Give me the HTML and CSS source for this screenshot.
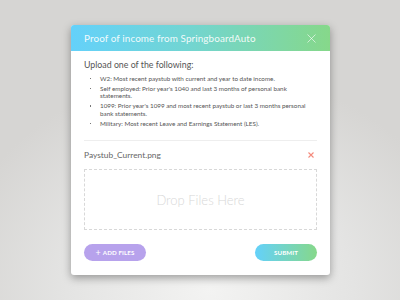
FILE: index.html
```html
<!DOCTYPE html>
<html>
<head>
<meta charset="utf-8">
<link rel="stylesheet" href="styles.css">
</head>
<body>
<div class="modal">
  <div class="header">
    <span class="title">Proof of income from SpringboardAuto</span>
    <svg class="close" width="9" height="9" viewBox="0 0 9 9"><path d="M0.5 0.5L8.5 8.5M8.5 0.5L0.5 8.5" stroke="#fff" stroke-opacity="0.6" stroke-width="1"/></svg>
  </div>
  <div class="content">
    <h2 class="lead">Upload one of the following:</h2>
    <ul class="reqs">
      <li>W2: Most recent paystub with current and year to date income.</li>
      <li>Self employed: Prior year's 1040 and last 3 months of personal bank statements.</li>
      <li>1099: Prior year's 1099 and most recent paystub or last 3 months personal bank statements.</li>
      <li>Military: Most recent Leave and Earnings Statement (LES).</li>
    </ul>
    <div class="file">
      <span class="fname">Paystub_Current.png</span>
      <svg class="remove" width="6" height="6" viewBox="0 0 6 6"><path d="M0.5 0.5L5.5 5.5M5.5 0.5L0.5 5.5" stroke="#f48a7c" stroke-width="1.1"/></svg>
    </div>
    <div class="drop">Drop Files Here</div>
    <div class="actions">
      <button class="btn add"><span class="plus">+</span>ADD FILES</button>
      <button class="btn submit">SUBMIT</button>
    </div>
  </div>
</div>
</body>
</html>
```
FILE: styles.css
```css
html, body { margin: 0; padding: 0; }
body {
  width: 400px;
  height: 300px;
  overflow: hidden;
  font-family: Lato, "Open Sans", sans-serif;
  background: radial-gradient(ellipse 260px 220px at 210px 290px, #f3f3f2 0%, #e4e4e3 55%, #d6d5d3 100%);
}
.modal {
  margin: 25px 0 0 71px;
  width: 259px;
  height: 250px;
  background: #fff;
  border-radius: 3px;
  overflow: hidden;
  box-shadow: 0 3px 8px rgba(0,0,0,0.35);
  box-sizing: border-box;
}
.header {
  height: 26px;
  padding: 0 13px;
  display: flex;
  align-items: center;
  justify-content: space-between;
  background: linear-gradient(90deg, #64d1fa 0%, #72d5d2 45%, #86d88a 100%);
}
.title {
  font-size: 9.9px;
  color: rgba(255,255,255,0.92);
  letter-spacing: 0.1px;
}
.close { margin-right: 1px; }
.content { padding: 0 13px; }
.lead {
  margin: 8px 0 0;
  font-size: 8.8px;
  font-weight: 400;
  color: #555;
  line-height: 12px;
}
.reqs {
  margin: 4px 0 0;
  padding: 0 6px 0 16px;
  list-style: none;
  font-size: 6.3px;
  color: #555;
  line-height: 7.4px;
}
.reqs li { position: relative; margin-bottom: 2.6px; }
.reqs li::before {
  content: "";
  position: absolute;
  left: -10px;
  top: 3px;
  width: 1.4px;
  height: 1.4px;
  background: #777;
}
.file {
  margin-top: 13px;
  border-top: 1px solid #eee;
  height: 28px;
  display: flex;
  align-items: center;
  justify-content: space-between;
  padding-right: 3px;
}
.fname { font-size: 8.4px; color: #666; }
.drop {
  height: 59px;
  border: 1.5px dashed #d8d8d8;
  display: flex;
  align-items: center;
  justify-content: center;
  font-size: 13px;
  font-weight: 300;
  color: #d8d8d8;
}
.actions {
  margin-top: 14px;
  display: flex;
  justify-content: space-between;
}
.btn {
  width: 62px;
  height: 17px;
  border: 0;
  border-radius: 9px;
  padding: 0;
  color: #fff;
  font-family: Lato, sans-serif;
  font-size: 6.2px;
  font-weight: 700;
  letter-spacing: 0.1px;
  display: flex;
  align-items: center;
  justify-content: center;
}
.add { background: #b7a2ec; }
.plus { font-size: 9px; font-weight: 400; margin-right: 2px; line-height: 1; }
.submit { background: linear-gradient(90deg, #64d1fa, #86d88a); }
```
